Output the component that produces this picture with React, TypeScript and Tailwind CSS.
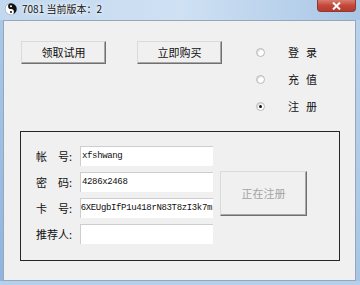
const cjk = "font-['Noto_Sans_CJK_SC',sans-serif]";

function YinYang() {
  return (
    <svg width="12" height="12" viewBox="0 0 24 24">
      <circle cx="12" cy="12" r="11.5" fill="#111" />
      <path d="M12 0.5 A11.5 11.5 0 0 0 12 23.5 A5.75 5.75 0 0 0 12 12 A5.75 5.75 0 0 1 12 0.5 Z" fill="#fff" />
      <circle cx="12" cy="6.25" r="2" fill="#fff" />
      <circle cx="12" cy="17.75" r="2" fill="#111" />
    </svg>
  );
}

function WinButton({ label, disabled, className }: { label: string; disabled?: boolean; className: string }) {
  return (
    <div
      className={`flex items-center justify-center bg-[#f0f0f0] border border-t-[#dadada] border-l-[#dadada] border-r-[#707070] border-b-[#707070] shadow-[inset_-1px_-1px_0_#a8a8a8] text-[11px] ${
        disabled ? 'text-[#a3a3a3]' : 'text-[#111]'
      } ${className}`}
    >
      {label}
    </div>
  );
}

function Radio({ a, b, checked }: { a: string; b: string; checked?: boolean }) {
  return (
    <div className="flex items-center h-[27px]">
      <div className="w-[9px] h-[9px] rounded-full border border-[#b8b8b8] bg-white shadow-[inset_1px_1px_1px_#d8d8d8] flex items-center justify-center">
        {checked && <div className="w-[3px] h-[3px] rounded-full bg-[#111]" />}
      </div>
      <div className="ml-[23px] flex gap-[7px] text-[11px] text-[#111]">
        <span>{a}</span>
        <span>{b}</span>
      </div>
    </div>
  );
}

function Field({ label, value, scrolled }: { label: React.ReactNode; value: string; scrolled?: boolean }) {
  return (
    <div className="flex items-center h-[20px]">
      <div className="w-[44px] text-[11px] text-[#111] whitespace-nowrap">{label}</div>
      <div
        className={`w-[133px] h-[20px] bg-white border-t border-l border-[#cdcdcd] overflow-hidden flex items-center ${
          scrolled ? 'justify-end' : 'justify-start'
        }`}
      >
        <span className="font-['Liberation_Mono',monospace] text-[9px] tracking-[-0.35px] text-[#111] whitespace-nowrap px-[1px]">
          {value}
        </span>
      </div>
    </div>
  );
}

export default function App() {
  return (
    <div className={`w-[360px] h-[285px] flex flex-col bg-gradient-to-b from-[#bcd4ee] to-[#b2cdea] ${cjk}`}>
      <div className="h-[20px] flex items-start bg-gradient-to-r from-[#c2d8ef] via-[#cfe1f3] to-[#a9c6e6]">
        <div className="ml-[5px] mt-[3px]">
          <YinYang />
        </div>
        <div className="ml-[5px] mt-[2px] text-[10px] leading-[14px] text-[#111] [text-shadow:0_0_6px_#fff,0_0_3px_#fff]">
          7081 当前版本：2
        </div>
        <div className="ml-auto mr-[4px] w-[39px] h-[12px] rounded-b-[4px] border border-t-0 border-[#8c3a36] bg-gradient-to-b from-[#d77c6f] via-[#c4483a] to-[#b73a2c] flex items-center justify-center">
          <svg width="9" height="8" viewBox="0 0 9 8">
            <path d="M1 0.5 L8 7.5 M8 0.5 L1 7.5" stroke="#fff" strokeWidth="2" />
          </svg>
        </div>
      </div>
      <div className="flex flex-1">
        <div className="w-[3px] bg-gradient-to-b from-[#a9c8e8] to-[#8fb5de]" />
        <div className="w-[353px] h-[261px] border border-[#97a7bb] bg-[#f0f0f0] flex flex-col pl-[16px]">
          <div className="flex items-start pt-[18px]">
            <WinButton label="领取试用" className="mt-[2px] ml-[1px] w-[85px] h-[23px]" />
            <WinButton label="立即购买" className="mt-[2px] ml-[31px] w-[85px] h-[23px]" />
            <div className="ml-[34px] flex flex-col">
              <Radio a="登" b="录" />
              <Radio a="充" b="值" />
              <Radio a="注" b="册" checked />
            </div>
          </div>
          <div className="mt-[11px] w-[320px] h-[130px] border border-[#262626] flex items-start pl-[15px] pt-[14px]">
            <div className="flex flex-col gap-[6px]">
              <Field label="帐　号:" value="xfshwang" />
              <Field label="密　码:" value="4286x2468" />
              <Field label="卡　号:" value="Q6XEUgbIfP1u418rN83T8zI3k7m" scrolled />
              <Field label="推荐人:" value="" />
            </div>
            <WinButton label="正在注册" disabled className="ml-[7px] mt-[25px] w-[87px] h-[45px]" />
          </div>
        </div>
        <div className="w-[4px] bg-gradient-to-b from-[#b9d2ec] to-[#a7c6e6]" />
      </div>
      <div className="h-[4px] bg-[#b6d0ec]" />
    </div>
  );
}
